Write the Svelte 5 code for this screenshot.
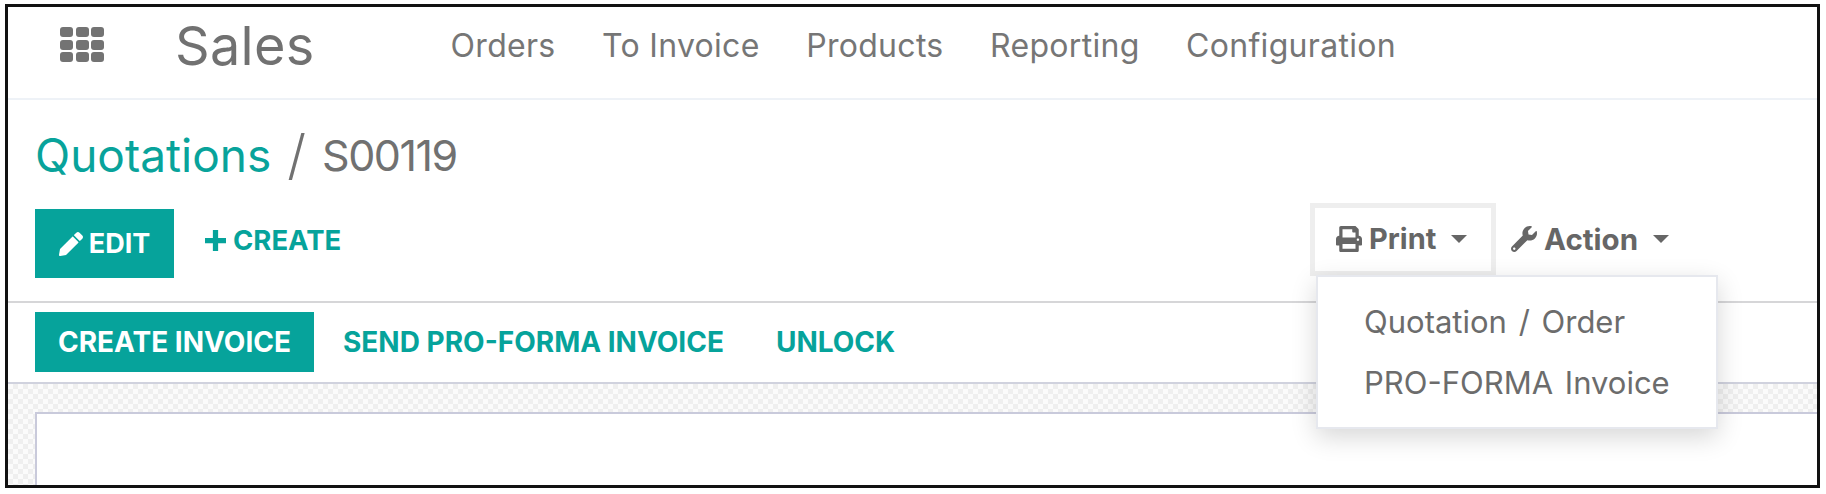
<script>
  const navItems = ["Orders", "To Invoice", "Products", "Reporting", "Configuration"];
  const printItems = ["Quotation / Order", "PRO-FORMA Invoice"];
  const gridCells = [0, 1, 2, 3, 4, 5, 6, 7, 8];
</script>

<div class="frame">
  <header class="navbar">
    <div class="apps" aria-label="Apps">
      {#each gridCells as cell (cell)}
        <span class="cell"></span>
      {/each}
    </div>
    <div class="brand">Sales</div>
    <nav class="menu">
      {#each navItems as item}
        <span>{item}</span>
      {/each}
    </nav>
  </header>

  <section class="control">
    <div class="breadcrumb">
      <span class="crumb-link">Quotations</span>
      <span class="crumb-sep">/</span>
      <span class="crumb-current">S00119</span>
    </div>
    <div class="buttons">
      <div class="left-actions">
        <button class="btn primary edit">
          <svg class="icon" viewBox="0 0 512 512"><path fill="currentColor" d="M497.9 142.1l-46.1 46.1c-4.7 4.7-12.3 4.7-17 0l-111-111c-4.7-4.7-4.7-12.3 0-17l46.1-46.1c18.7-18.7 49.1-18.7 67.9 0l60.1 60.1c18.8 18.7 18.8 49.1 0 67.9zM284.2 99.8L21.6 362.4.4 483.9c-2.9 16.4 11.4 30.6 27.8 27.8l121.5-21.3 262.6-262.6c4.7-4.7 4.7-12.3 0-17l-111-111c-4.8-4.7-12.4-4.7-17.1 0z"/></svg>
          EDIT
        </button>
        <button class="btn link create">
          <svg class="plus" viewBox="0 0 20 20"><path fill="currentColor" d="M7.5 0h5v7.5H20v5h-7.5V20h-5v-7.5H0v-5h7.5z"/></svg>
          CREATE
        </button>
      </div>
      <div class="right-actions">
        <div class="dropdown">
          <button class="tool open">
            <svg class="icon tool-icon" viewBox="0 0 512 512"><path fill="currentColor" d="M448 192V77.25c0-8.49-3.37-16.62-9.37-22.63L393.37 9.37c-6-6-14.14-9.37-22.63-9.37H96C78.33 0 64 14.33 64 32v160c-35.35 0-64 28.65-64 64v112c0 8.84 7.16 16 16 16h48v96c0 17.67 14.33 32 32 32h320c17.67 0 32-14.33 32-32v-96h48c8.84 0 16-7.16 16-16V256c0-35.35-28.65-64-64-64zm-64 256H128v-96h256v96zm0-224H128V64h192v48c0 8.84 7.16 16 16 16h48v96zm48 72c-13.25 0-24-10.75-24-24 0-13.26 10.75-24 24-24s24 10.74 24 24c0 13.25-10.75 24-24 24z"/></svg>
            Print
            <span class="caret"></span>
          </button>
          <div class="menu-panel">
            {#each printItems as item}
              <div class="menu-item">{item}</div>
            {/each}
          </div>
        </div>
        <button class="tool">
          <svg class="icon tool-icon" viewBox="0 0 512 512"><path fill="currentColor" d="M507.73 109.1c-2.24-9.03-13.54-12.09-20.12-5.51l-74.36 74.36-67.88-11.31-11.31-67.88 74.36-74.36c6.62-6.62 3.43-17.9-5.66-20.16-47.38-11.74-99.55.91-136.58 37.93-39.64 39.64-50.55 97.1-34.05 147.2L18.74 402.76c-24.99 24.99-24.99 65.51 0 90.5 24.99 24.99 65.51 24.99 90.5 0l213.21-213.21c50.12 16.71 107.47 5.68 147.37-34.22 37.07-37.07 49.7-89.32 37.91-136.73zM64 472c-13.25 0-24-10.75-24-24 0-13.26 10.75-24 24-24s24 10.74 24 24c0 13.25-10.75 24-24 24z"/></svg>
          Action
          <span class="caret"></span>
        </button>
      </div>
    </div>
  </section>

  <section class="statusbar">
    <button class="btn primary invoice">CREATE INVOICE</button>
    <button class="btn link send">SEND PRO-FORMA INVOICE</button>
    <button class="btn link unlock">UNLOCK</button>
  </section>

  <section class="sheet-bg">
    <div class="sheet"></div>
  </section>
</div>

<style>
  :global(body) {
    background: #fff;
    font-family: Inter, "Liberation Sans", sans-serif;
  }

  .frame {
    box-sizing: border-box;
    height: 484px;
    margin: 4px 6px 0 5px;
    border: 3px solid #111;
    background: #fff;
    display: flex;
    flex-direction: column;
    overflow: hidden;
    color: #717171;
  }

  .navbar {
    box-sizing: border-box;
    flex: none;
    height: 93px;
    padding-left: 52px;
    display: flex;
    align-items: flex-start;
    border-bottom: 2px solid #eef2f7;
  }

  .apps {
    display: grid;
    grid-template-columns: repeat(3, 13px);
    grid-auto-rows: 10px;
    gap: 2.5px;
    margin-top: 20px;
  }

  .cell {
    background: #737373;
    border-radius: 3px;
  }

  .brand {
    margin: 9px 0 0 71px;
    font-size: 54px;
    line-height: 60px;
    letter-spacing: 0.3px;
    color: #717171;
  }

  .menu {
    display: flex;
    gap: 46.5px;
    margin: 19px 0 0 136px;
    font-size: 32px;
    line-height: 40px;
    letter-spacing: 0.3px;
    color: #767676;
  }

  .control {
    box-sizing: border-box;
    flex: none;
    height: 203px;
    padding: 2px 0 0 27px;
    border-bottom: 2px solid #d6d6d8;
  }

  .breadcrumb {
    display: flex;
    align-items: center;
    gap: 16px;
    height: 105px;
    font-size: 46px;
    line-height: 68px;
  }

  .crumb-link {
    color: #08a39b;
  }

  .crumb-sep {
    font-size: 54px;
    font-weight: 300;
  }

  .crumb-current {
    font-size: 43px;
    letter-spacing: -1.5px;
  }

  .btn {
    border: none;
    font: inherit;
    font-weight: 700;
    padding: 0;
    cursor: pointer;
    display: inline-flex;
    align-items: center;
    justify-content: center;
    background: none;
  }

  .primary {
    background: #06a39b;
    color: #fff;
  }

  .link {
    color: #06a39b;
  }

  .buttons {
    display: flex;
    justify-content: space-between;
    margin-top: -4px;
  }

  .left-actions {
    display: flex;
    align-items: flex-start;
    margin-top: 6px;
  }

  .edit {
    width: 139px;
    height: 69px;
    font-size: 27px;
    gap: 6px;
  }

  .icon {
    width: 24px;
    height: 24px;
  }

  .create {
    margin-left: 31px;
    height: 62px;
    font-size: 27.5px;
    gap: 7px;
  }

  .plus {
    width: 21px;
    height: 21px;
  }

  .right-actions {
    display: flex;
    align-items: flex-start;
    margin-right: 123px;
  }

  .dropdown {
    position: relative;
  }

  .tool {
    box-sizing: border-box;
    height: 73px;
    border: 5px solid transparent;
    background: none;
    font: inherit;
    font-size: 29.5px;
    font-weight: 700;
    color: #666;
    display: inline-flex;
    align-items: center;
    padding: 0 20px 2px 10px;
    gap: 7px;
    cursor: pointer;
  }

  .tool.open {
    width: 186px;
    border-color: #eeeeee;
    padding-left: 21px;
    font-size: 29px;
  }

  .tool-icon {
    width: 26px;
    height: 26px;
  }

  .caret {
    width: 0;
    height: 0;
    margin-left: 8px;
    border-left: 8px solid transparent;
    border-right: 8px solid transparent;
    border-top: 8px solid currentColor;
  }

  /* open print menu sits over the rows below */
  .menu-panel {
    position: absolute;
    top: 72px;
    left: 6px;
    z-index: 5;
    box-sizing: border-box;
    width: 402px;
    height: 154px;
    padding: 14px 0 0 46px;
    background: #fff;
    border: 2px solid #e6e8ee;
    box-shadow: 0 8px 24px rgba(0, 0, 0, 0.16);
  }

  .menu-item {
    font-size: 31px;
    line-height: 61px;
    word-spacing: 3px;
    color: #6c6c6c;
    white-space: nowrap;
  }

  .statusbar {
    box-sizing: border-box;
    flex: none;
    height: 81px;
    padding: 9px 0 0 27px;
    display: flex;
    align-items: flex-start;
    border-bottom: 2px solid #d0d2de;
  }

  .invoice {
    width: 279px;
    height: 60px;
    font-size: 28px;
  }

  .send,
  .unlock {
    height: 60px;
    font-size: 28px;
  }

  .send {
    margin-left: 29px;
  }

  .unlock {
    margin-left: 52px;
  }

  .sheet-bg {
    flex: 1;
    padding: 28px 0 0 27px;
    background: repeating-conic-gradient(#efefef 0 25%, #fbfbfb 0 50%) 0 0 / 10px 10px;
  }

  .sheet {
    height: 100%;
    background: #fff;
    border-top: 2px solid #c9cadb;
    border-left: 2px solid #c9cadb;
  }
</style>
